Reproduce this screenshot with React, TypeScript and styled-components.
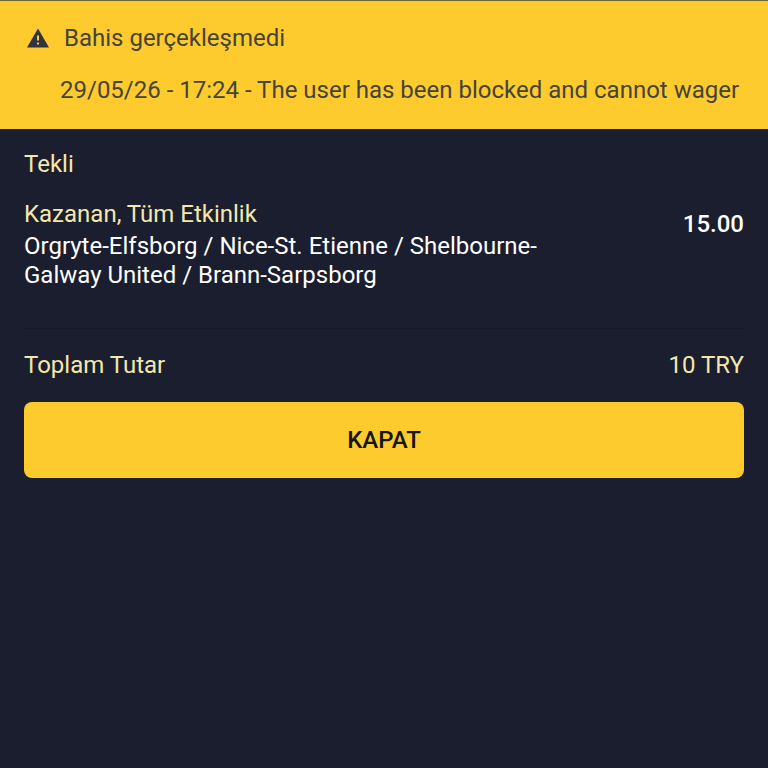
import React from 'react'
import styled, { createGlobalStyle } from 'styled-components'

const colors = {
  page: '#1a1e2e',
  yellow: '#fecb2e',
  bannerText: '#46433a',
  cream: '#f4e7ad',
  white: '#ffffff',
  divider: '#151927',
  buttonText: '#14161c',
  icon: '#2f3342',
}

const GlobalStyle = createGlobalStyle`
  html, body {
    margin: 0;
    padding: 0;
    background: ${colors.page};
  }
  body {
    font-family: Roboto, "Liberation Sans", sans-serif;
  }
`

const WarningIcon = () => (
  <svg width="24" height="24" viewBox="0 0 24 24" aria-hidden="true">
    <path
      fill={colors.icon}
      d="M1 21.5 12 2.5l11 19H1Zm12-3v-2h-2v2h2Zm0-4v-5h-2v5h2Z"
    />
  </svg>
)

export default function App() {
  return (
    <>
      <GlobalStyle />
      <Page>
        <Banner>
          <BannerHead>
            <WarningIcon />
            <BannerTitle>Bahis gerçekleşmedi</BannerTitle>
          </BannerHead>
          <BannerMessage>
            29/05/26 - 17:24 - The user has been blocked and cannot wager
          </BannerMessage>
        </Banner>

        <Content>
          <BetType>Tekli</BetType>

          <BetRow>
            <BetInfo>
              <Market>Kazanan, Tüm Etkinlik</Market>
              <Events>
                Orgryte-Elfsborg / Nice-St. Etienne / Shelbourne-
                <br />
                Galway United / Brann-Sarpsborg
              </Events>
            </BetInfo>
            <Odds>15.00</Odds>
          </BetRow>

          <TotalRow>
            <span>Toplam Tutar</span>
            <span>10 TRY</span>
          </TotalRow>

          <CloseButton>KAPAT</CloseButton>
        </Content>
      </Page>
    </>
  )
}

const Page = styled.div`
  min-height: 768px;
  background: ${colors.page};
`

const Banner = styled.div`
  box-sizing: border-box;
  height: 129px;
  padding: 0 24px;
  background: ${colors.yellow};
  border-top: 1px solid #6f6436;
  color: ${colors.bannerText};
`

const BannerHead = styled.div`
  display: flex;
  align-items: center;
  gap: 14px;
  padding: 25px 0 0 2px;
  height: 24px;
  font-size: 24px;
`

const BannerTitle = styled.span`
  line-height: 24px;
`

const BannerMessage = styled.div`
  margin-top: 26px;
  padding-left: 36px;
  font-size: 24px;
  line-height: 29px;
  white-space: nowrap;
`

const Content = styled.div`
  padding: 21px 24px 0;
`

const BetType = styled.div`
  font-size: 24px;
  line-height: 28px;
  color: ${colors.cream};
`

const BetRow = styled.div`
  display: flex;
  justify-content: space-between;
  align-items: flex-start;
  margin-top: 22px;
  padding-bottom: 38px;
  border-bottom: 1px solid ${colors.divider};
`

const BetInfo = styled.div`
  display: flex;
  flex-direction: column;
`

const Market = styled.div`
  font-size: 24px;
  line-height: 28px;
  color: ${colors.cream};
`

const Events = styled.div`
  margin-top: 4px;
  font-size: 24px;
  line-height: 29px;
  color: ${colors.white};
`

const Odds = styled.div`
  margin-top: 10px;
  font-size: 24px;
  font-weight: 500;
  line-height: 28px;
  color: ${colors.white};
`

const TotalRow = styled.div`
  display: flex;
  justify-content: space-between;
  margin-top: 22px;
  font-size: 24px;
  line-height: 28px;
  color: ${colors.cream};
`

const CloseButton = styled.button`
  display: block;
  width: 100%;
  height: 76px;
  margin-top: 23px;
  border: 0;
  border-radius: 8px;
  background: ${colors.yellow};
  color: ${colors.buttonText};
  font-family: inherit;
  font-size: 24px;
  font-weight: 500;
`
